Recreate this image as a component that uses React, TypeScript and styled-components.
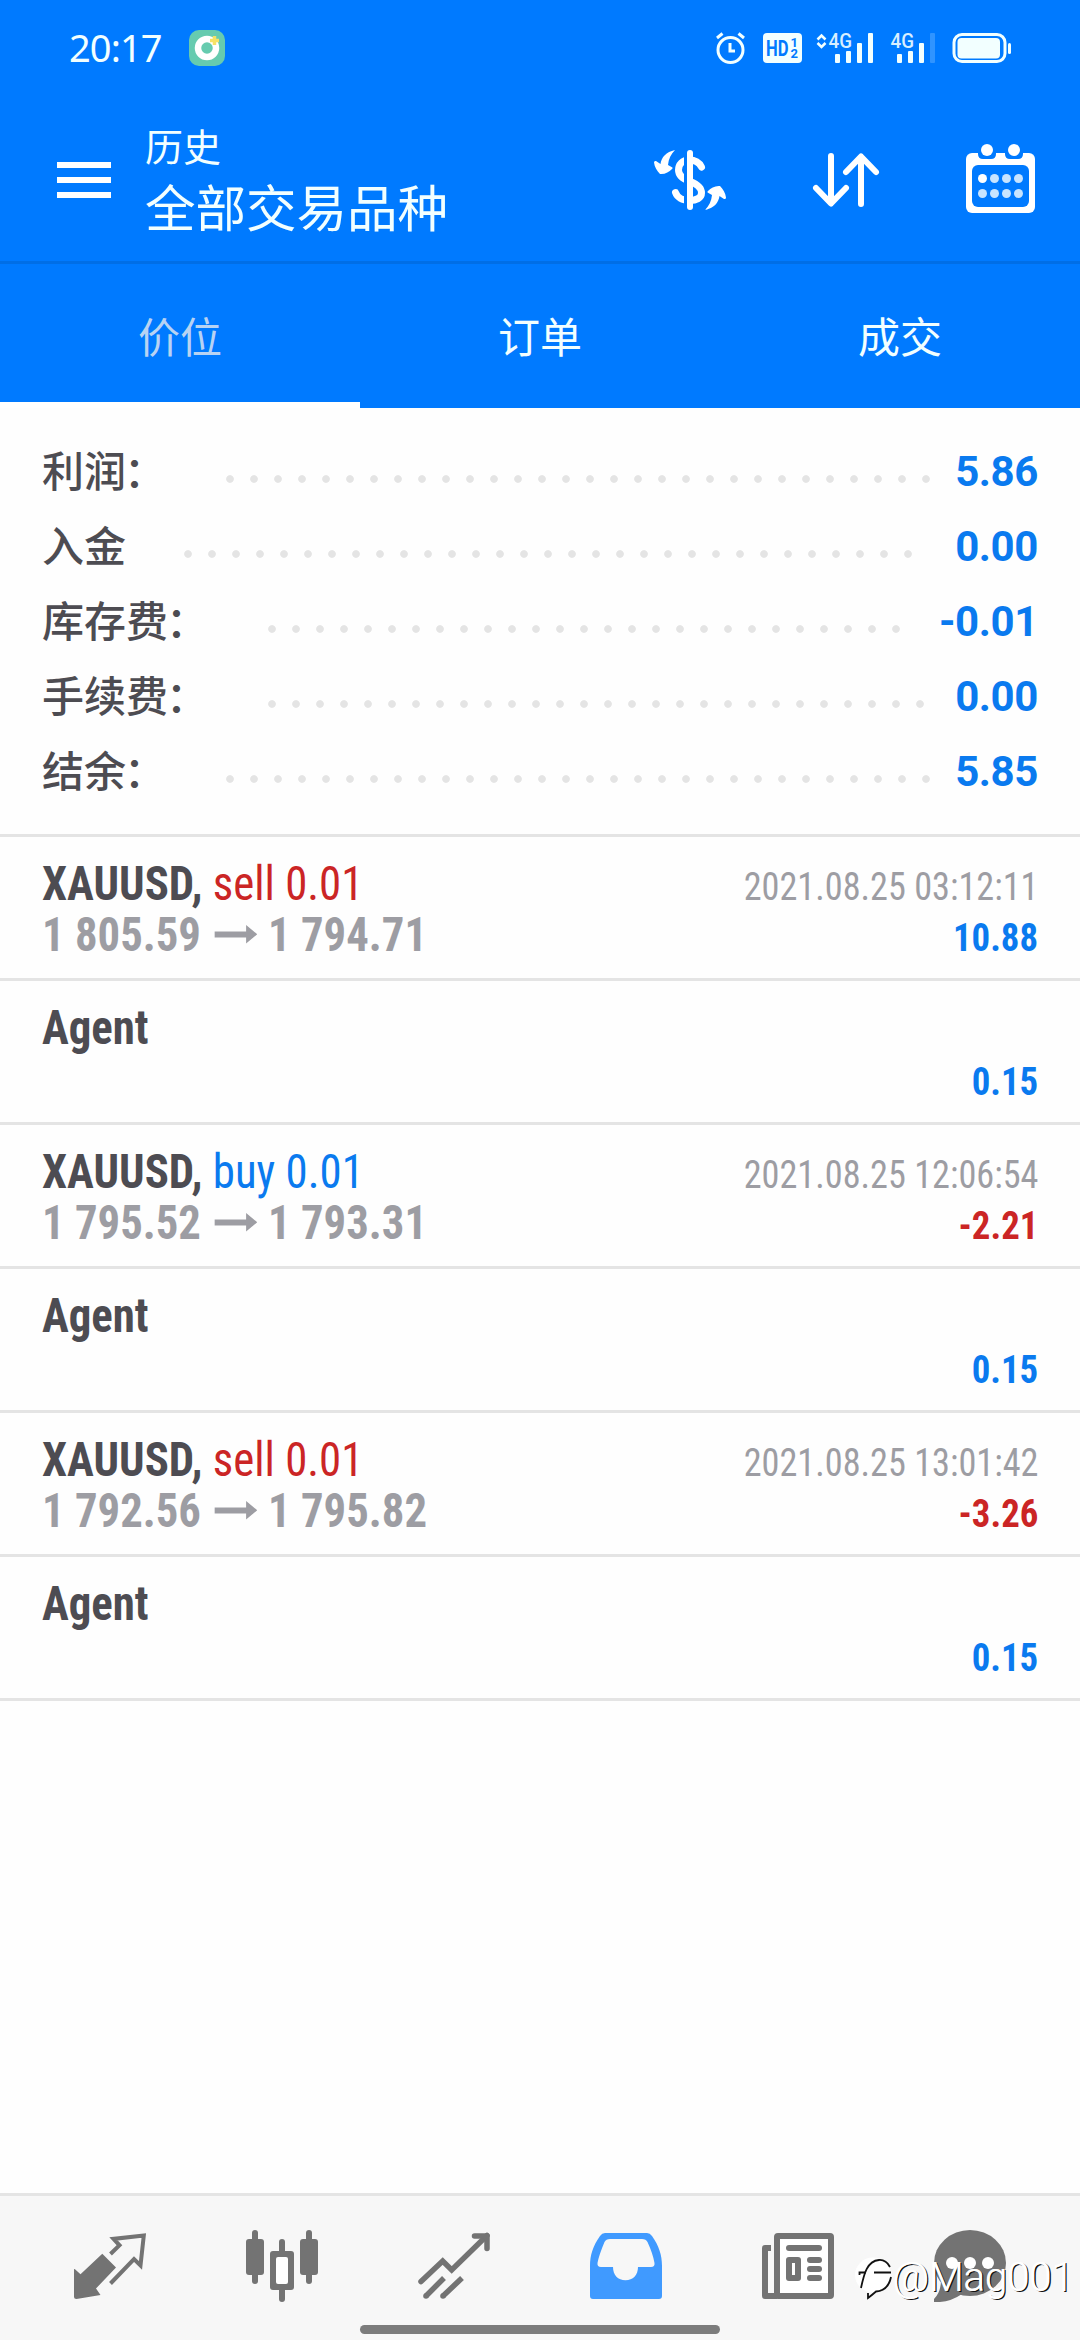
import React from "react";
import styled, { createGlobalStyle } from "styled-components";

const Global = createGlobalStyle`
  * { box-sizing: border-box; }
  html, body { margin: 0; padding: 0; background: #fff; }
`;

const cjk = `"Noto Sans CJK SC", sans-serif`;

const Screen = styled.div`
  width: 1080px;
  height: 2340px;
  display: flex;
  flex-direction: column;
  background: #fefefe;
  font-family: Roboto, ${cjk};
  overflow: hidden;
  position: relative;
`;

const StatusBar = styled.div`
  height: 96px;
  flex: none;
  background: #007aff;
  display: flex;
  justify-content: space-between;
  padding: 0 66px 0 69px;
  align-items: center;
`;
const StatusSide = styled.div`
  display: flex;
  align-items: center;
`;
const Clock = styled.span`
  font-family: "Noto Sans", sans-serif;
  font-size: 38px;
  line-height: 50px;
  letter-spacing: -0.9px;
  padding-bottom: 3px;
  color: #f2ffff;
  width: 120px;
`;

const Header = styled.header`
  height: 168px;
  flex: none;
  background: #007aff;
  border-bottom: 3px solid #006ee6;
  display: flex;
  align-items: flex-start;
  padding: 0 42px 0 57px;
`;
const MenuButton = styled.div`
  display: flex;
  flex-direction: column;
  gap: 9px;
  margin-top: 66px;
  width: 54px;
`;
const MenuLine = styled.i`
  height: 6px;
  background: #fff;
`;
const Titles = styled.div`
  margin-left: 34px;
  flex: 1;
  display: flex;
  flex-direction: column;
  color: #f2ffff;
  font-family: ${cjk};
  padding-top: 24px;
`;
const Subtitle = styled.span`
  font-size: 38px;
  line-height: 50px;
`;
const Title = styled.span`
  font-size: 50.5px;
  line-height: 71px;
`;
const Actions = styled.div`
  display: flex;
  gap: 84px;
  margin-top: 48px;
`;

const Tabs = styled.nav`
  flex: none;
  height: 144px;
  display: grid;
  grid-template-columns: repeat(3, 1fr);
  background: #007aff;
`;
const Tab = styled.div<{ $active?: boolean }>`
  border-bottom: 6px solid ${(p) => (p.$active ? "#fff" : "#007aff")};
  color: ${(p) => (p.$active ? "#b8d3f3" : "#f2ffff")};
  font-family: ${cjk};
  font-size: 42px;
  line-height: 60px;
  padding-top: 41px;
  text-align: center;
`;

const Summary = styled.section`
  flex: none;
  height: 429px;
  padding: 25px 42px 0;
  border-bottom: 3px solid #e4e4e4;
`;
const SummaryRow = styled.div`
  height: 75px;
  display: flex;
  align-items: center;
`;
const SummaryLabel = styled.span`
  font-family: ${cjk};
  font-weight: 500;
  font-size: 42px;
  line-height: 71px;
  padding-bottom: 4px;
  color: #4d4c52;
  margin-right: 50px;
`;
const Colon = styled.span`
  margin: 0 2px 0 -2px;
`;
const Leader = styled.i<{ $dots: number }>`
  width: ${(p) => p.$dots * 24}px;
  height: 24px;
  margin-top: 16px;
  background: radial-gradient(circle, #e4e4e4 3.4px, transparent 4.2px) 0 0 / 24px 24px;
`;
const SummaryValue = styled.span`
  margin-left: auto;
  font-weight: 700;
  font-size: 42px;
  letter-spacing: -0.4px;
  line-height: 73px;
  padding-top: 2px;
  color: #0a7aef;
`;

const Deal = styled.article`
  flex: none;
  height: 144px;
  padding: 17px 42px 0;
  border-bottom: 3px solid #e4e4e4;
  font-family: "Roboto Condensed", Roboto, sans-serif;
  font-stretch: condensed;
`;
const Line = styled.div`
  display: flex;
  align-items: baseline;
  height: 51px;
  line-height: 60px;
  white-space: pre;
  &::before {
    content: "\\200b";
    font-size: 48px;
  }
`;
const Name = styled.span`
  font-size: 48px;
  font-weight: 700;
  transform: scaleX(0.934);
  transform-origin: left;
  color: #4d4c52;
`;
const Side = styled.span<{ $buy?: boolean }>`
  font-weight: 400;
  color: ${(p) => (p.$buy ? "#0a7aef" : "#cb2525")};
`;
const Prices = styled.span`
  font-size: 48px;
  font-weight: 700;
  transform: scaleX(0.932);
  transform-origin: left;
  color: #9d9da3;
`;
const PriceArrow = styled.svg`
  margin: 0 12px 0 14px;
  vertical-align: 7px;
`;
const Stamp = styled.span`
  margin-left: auto;
  font-size: 39.4px;
  transform: scaleX(0.92);
  transform-origin: right;
  color: #9d9da3;
`;
const Profit = styled.span<{ $loss?: boolean }>`
  margin-left: auto;
  font-size: 39.4px;
  font-weight: 700;
  transform: scaleX(0.935);
  transform-origin: right;
  color: ${(p) => (p.$loss ? "#cb2525" : "#0a7aef")};
`;

const Spacer = styled.div`
  flex: 1;
`;

const BottomBar = styled.footer`
  flex: none;
  height: 147px;
  border-top: 3px solid #e4e4e4;
  background: #f7f7f7;
  display: grid;
  grid-template-columns: repeat(6, 172px);
  justify-content: center;
  justify-items: center;
  padding-top: 34px;
`;
const HomeIndicator = styled.div`
  position: absolute;
  left: 360px;
  bottom: 6px;
  width: 360px;
  height: 9px;
  border-radius: 5px;
  background: #7c7c7c;
`;
const Watermark = styled.div`
  position: absolute;
  right: 6px;
  bottom: 35px;
  display: flex;
  align-items: center;
  font-family: Roboto, sans-serif;
  font-weight: 300;
  font-size: 40px;
  line-height: 54px;
  color: #fff;
  text-shadow: -0.5px -0.5px 0 #fff, 1.3px 1.3px 0 #111;
`;

const Icon = ({ children, w = 72, h = 72 }: { children: React.ReactNode; w?: number; h?: number }) => (
  <svg width={w} height={h} viewBox={`0 0 ${w} ${h}`} fill="none" display="block">
    {children}
  </svg>
);

const StatusIcons = () => (
  <Icon w={298} h={36}>
    <g stroke="#f2ffff" strokeWidth="3">
      <circle cx="14.5" cy="20" r="12.5" />
      <path d="M14 13v8h5" />
      <path d="M1 8l5.500-4.500M28 8l-5.500-4.500" />
    </g>
    <rect x="47" y="3" width="39" height="30" rx="4" fill="#f2ffff" />
    <g fontFamily="Roboto, sans-serif" fontWeight="700" fill="#007aff">
      <text x="50" y="25.700" fontSize="22" textLength="22.500" lengthAdjust="spacingAndGlyphs">HD</text>
      <text x="74.500" y="16.500" fontSize="13">1</text>
      <text x="74.500" y="28" fontSize="13">2</text>
    </g>
    <path d="M101.500 9.500l4-4 4 4M101.500 13l4 4 4-4" stroke="#f2ffff" strokeWidth="2.500" />
    <g fontFamily="Roboto, sans-serif" fontSize="19.5" fontWeight="500" fill="#d9efff">
      <text x="112.500" y="18" textLength="23.500" lengthAdjust="spacingAndGlyphs">4G</text>
      <text x="174.500" y="18" textLength="23.500" lengthAdjust="spacingAndGlyphs">4G</text>
    </g>
    <g fill="#f2ffff">
      <rect x="119" y="24" width="5" height="9" rx="1" />
      <rect x="130" y="21" width="5" height="12" rx="1" />
      <rect x="141" y="13" width="5" height="20" rx="1" />
      <rect x="152" y="3" width="5" height="30" rx="1" />
      <rect x="181" y="24" width="5" height="9" rx="1" />
      <rect x="192" y="21" width="5" height="12" rx="1" />
      <rect x="203" y="13" width="5" height="20" rx="1" />
      <rect x="214" y="3" width="5" height="30" rx="1" opacity=".2" />
      <rect x="241.500" y="8" width="42.500" height="20.500" rx="4" />
      <rect x="292" y="13" width="3" height="11" rx="1.500" />
    </g>
    <rect x="238" y="4.500" width="51" height="27" rx="8" stroke="#f2ffff" strokeWidth="3" />
  </Icon>
);

const summary = [
  { label: "利润", colon: true, value: "5.86", dots: 30 },
  { label: "入金", colon: false, value: "0.00", dots: 31 },
  { label: "库存费", colon: true, value: "-0.01", dots: 27 },
  { label: "手续费", colon: true, value: "0.00", dots: 28 },
  { label: "结余", colon: true, value: "5.85", dots: 30 },
];

type Entry = { side?: string; from?: string; to?: string; time?: string; profit: string };
const deals: Entry[] = [
  { side: "sell", from: "1 805.59", to: "1 794.71", time: "2021.08.25 03:12:11", profit: "10.88" },
  { profit: "0.15" },
  { side: "buy", from: "1 795.52", to: "1 793.31", time: "2021.08.25 12:06:54", profit: "-2.21" },
  { profit: "0.15" },
  { side: "sell", from: "1 792.56", to: "1 795.82", time: "2021.08.25 13:01:42", profit: "-3.26" },
  { profit: "0.15" },
];

const G = "#737373";

export default function App() {
  return (
    <Screen>
      <Global />
      <StatusBar>
        <StatusSide>
          <Clock>20:17</Clock>
          <Icon w={36} h={36}>
            <rect width="36" height="36" rx="10" fill="#66cbaf" />
            <circle cx="18" cy="18" r="9" stroke="#fff" strokeWidth="6.500" />
            <path d="M25.500 6v9M21 10.500h9" stroke="#f5e266" strokeWidth="3.500" />
          </Icon>
        </StatusSide>
        <StatusIcons />
      </StatusBar>
      <Header>
        <MenuButton>
          <MenuLine />
          <MenuLine />
          <MenuLine />
        </MenuButton>
        <Titles>
          <Subtitle>历史</Subtitle>
          <Title>全部交易品种</Title>
        </Titles>
        <Actions>
          <Icon>
            <path
              d="M47.500 23C45 18 40 16 35 16C28.500 16 24.500 20.500 24.500 26C24.500 32 29 35 36 37.500C43 40 47.500 43 47.500 49C47.500 54 42 56.500 36 56.500C28 56.500 23 53 21.500 48.500"
              stroke="#fff"
              strokeWidth="7"
              strokeLinecap="round"
            />
            <path d="M30 4h3v64h-3z" fill="#007aff" />
            <rect x="33" y="6" width="6" height="60" rx="3" fill="#fff" />
            <g fill="#fff">
              <path id="swap" d="M21 6C12 8 7.500 13 6.500 20L2 17Q0 16.500 0 18.500C.5 23 3 27 6 30C11 30.500 15 28 18 25Q19.500 24 18 23.300L14 21C14.500 15 17 10 21 6Z" />
              <use href="#swap" transform="rotate(180 36 36)" />
            </g>
          </Icon>
          <Icon>
            <path
              d="M21 12V59M6 44L21 59.500 36 44M51 60V13M36 28L51 12.500 66 28"
              stroke="#fff"
              strokeWidth="6"
              strokeLinecap="round"
              strokeLinejoin="round"
            />
          </Icon>
          <Icon>
            <rect y="9" width="69" height="60" rx="6" fill="#fff" />
            <path d="M12 8h18v2q0 5-5 5h-8q-5 0-5-5zM39 8h18v2q0 5-5 5h-8q-5 0-5-5z" fill="#007aff" />
            <rect x="6" y="21" width="57" height="42" rx="6" fill="#007aff" />
            <circle cx="21" cy="6" r="6" fill="#fff" />
            <circle cx="48" cy="6" r="6" fill="#fff" />
            {[0, 1, 2, 3, 4, 5, 6, 7].map((i) => (
              <circle key={i} cx={16.5 + (i % 4) * 12} cy={i < 4 ? 34.5 : 49.5} r="4.500" fill={i ? "#c8e4ff" : "#fff"} />
            ))}
          </Icon>
        </Actions>
      </Header>
      <Tabs>
        <Tab $active>价位</Tab>
        <Tab>订单</Tab>
        <Tab>成交</Tab>
      </Tabs>
      <Summary>
        {summary.map((s) => (
          <SummaryRow key={s.label}>
            <SummaryLabel>
              {s.label}
              {s.colon && <Colon>：</Colon>}
            </SummaryLabel>
            <Leader $dots={s.dots} />
            <SummaryValue>{s.value}</SummaryValue>
          </SummaryRow>
        ))}
      </Summary>
      {deals.map((d, i) => (
        <Deal key={i}>
          <Line>
            {d.side ? (
              <Name>
                XAUUSD, <Side $buy={d.side === "buy"}>{d.side} 0.01</Side>
              </Name>
            ) : (
              <Name>Agent</Name>
            )}
            {d.time && <Stamp>{d.time}</Stamp>}
          </Line>
          <Line>
            {d.from && (
              <Prices>
                {d.from}
                <PriceArrow width="46" height="20" viewBox="0 0 46 20">
                  <path d="M0 7.500H34V1L46 10.300 34 19.500V13.500H0Z" fill="#9d9da3" />
                </PriceArrow>
                {d.to}
              </Prices>
            )}
            <Profit $loss={d.profit.startsWith("-")}>{d.profit}</Profit>
          </Line>
        </Deal>
      ))}
      <Spacer />
      <BottomBar>
        <Icon>
          <path d="M0 39.500Q0 38.500 1 39.300L6.500 44.300 28.300 23.700 42 37.500 22 58.500 26.500 65 2.500 69Q0 69 0 66.500Z" fill={G} />
          <path d="M36.500 24L45.500 15.300 39.500 8.900 69.800 5.500 66.500 35.500 60 29 36.500 53.500" stroke={G} strokeWidth="4" />
        </Icon>
        <Icon>
          <g fill={G}>
            <rect y="9" width="18" height="36" rx="3" />
            <rect x="6" width="6" height="54" rx="3" />
            <rect x="33" y="9" width="6" height="63" rx="3" />
            <rect x="24" y="21" width="24" height="39" rx="3" />
            <rect x="54" y="9" width="18" height="36" rx="3" />
            <rect x="60" width="6" height="54" rx="3" />
          </g>
          <rect x="30" y="27" width="12" height="27" rx="2" fill="#fff" />
        </Icon>
        <Icon>
          <g stroke={G} strokeWidth="5.500">
            <path d="M3 51.500L24.700 31 33.700 40 69 5.500" strokeLinejoin="miter" strokeLinecap="round" />
            <path d="M56.500 6H69V18.500" strokeLinecap="round" strokeLinejoin="round" />
            <path d="M8 66L26 48M25 66L44 48" />
          </g>
          <circle cx="8" cy="66" r="2.800" fill={G} />
          <circle cx="25" cy="66" r="2.800" fill={G} />
        </Icon>
        <Icon>
          <path d="M15 3H57Q60 3 62 6C69 16 72 25 72 36V66Q72 69 69 69H3Q0 69 0 66V36C0 25 3 16 10 6Q12 3 15 3Z" fill="#409aff" />
          <path d="M20 9H52Q56 9 57.500 12Q63 24 64.500 33Q65 37 61 37H48C48 45 43 50.300 35.500 50.300C28 50.300 23 45 23 37H11Q7 37 7.500 33Q9 25 14.500 12Q16 9 20 9Z" fill="#f7f7f7" />
        </Icon>
        <Icon>
          <rect x="15" y="6" width="54" height="60" rx="1" fill="#fff" stroke={G} strokeWidth="6" />
          <path d="M9 15H3Q0 15 0 18V66Q0 69 3 69H15V63H6V21H9Z" fill={G} />
          <g fill={G}>
            <rect x="24" y="15" width="36" height="6" rx="3" />
            <rect x="45" y="27" width="15" height="6" rx="3" />
            <rect x="45" y="36" width="15" height="6" rx="3" />
            <rect x="45" y="45" width="15" height="6" rx="3" />
            <rect x="24" y="27" width="15" height="24" rx="3" />
          </g>
          <path d="M30 33h3v12h-3z" fill="#fff" />
        </Icon>
        <Icon>
          <ellipse cx="36" cy="33" rx="36" ry="33" fill={G} />
          <path d="M7 50Q7 62 0 69V72Q15 73 28 64Z" fill={G} />
          <g fill="#fff">
            <circle cx="18" cy="33" r="6" />
            <circle cx="36" cy="33" r="6" />
            <circle cx="54" cy="33" r="6" />
          </g>
        </Icon>
      </BottomBar>
      <HomeIndicator />
      <Watermark>
        <Icon w={38} h={46}>
          <ellipse cx="18" cy="20" rx="18" ry="17.500" fill="#fff" />
          <g stroke="#111" strokeWidth="1.800">
            <path d="M6 33C9 19 12 6 24 5Q31 4.500 35 12" />
            <path d="M4.500 20V17.500H11M19 17.500H36" />
            <path d="M36 22C34 32 28 36 21 36.500Q17 40 13 43V38" />
          </g>
        </Icon>
        @Mag001
      </Watermark>
    </Screen>
  );
}
